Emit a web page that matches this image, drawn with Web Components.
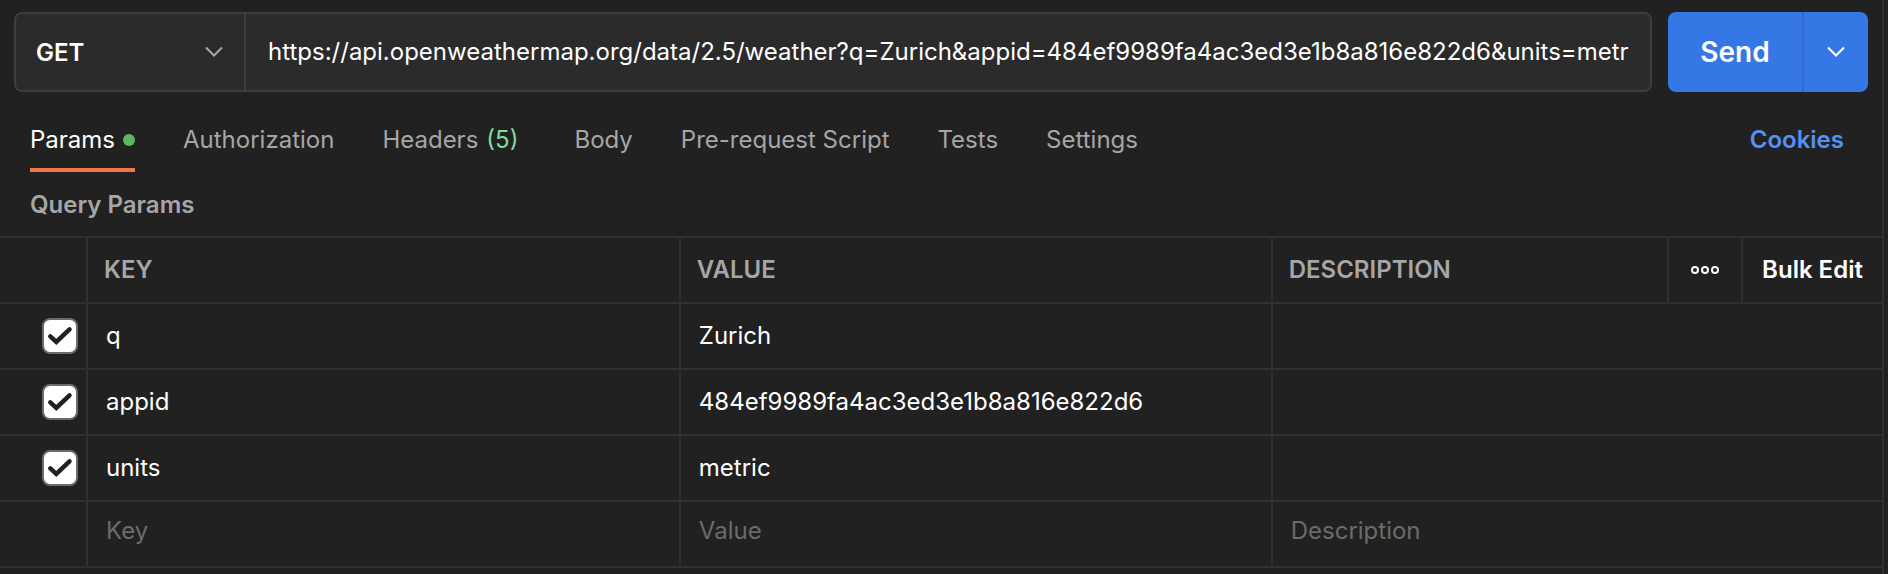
<!DOCTYPE html>
<html lang="en">
<head>
<meta charset="utf-8">
<title>Request builder</title>
<style>
html, body { height: 100%; }
body {
  margin: 0;
  background: #212121;
  color: #fff;
  font: 24px/32px Inter, "Liberation Sans", sans-serif;
  --bg: #212121;
  --field: #2b2b2b;
  --field-line: #3d3d3d;
  --line: #303030;
  --muted: #a6a6a6;
  --faint: #6b6b6b;
  --blue: #3578e5;
  --link: #5591f5;
  --orange: #f07747;
  --green: #5bb85d;
}
</style>
</head>
<body>
<request-panel>
  <request-bar slot="bar" method="GET" url="https://api.openweathermap.org/data/2.5/weather?q=Zurich&amp;appid=484ef9989fa4ac3ed3e1b8a816e822d6&amp;units=metric"></request-bar>
  <request-tabs slot="tabs">
    <request-tab selected dot>Params</request-tab>
    <request-tab>Authorization</request-tab>
    <request-tab count="(5)">Headers</request-tab>
    <request-tab>Body</request-tab>
    <request-tab>Pre-request Script</request-tab>
    <request-tab>Tests</request-tab>
    <request-tab>Settings</request-tab>
  </request-tabs>
  <span slot="heading">Query Params</span>
  <params-table slot="table"></params-table>
</request-panel>

<template id="request-panel">
  <style>
    :host { display: block; min-height: 100%; margin-right: 4px; border-right: 2px solid var(--line); box-sizing: border-box; }
    section { background: var(--bg); }
    .bar { padding: 12px 14px 0; }
    h2 { margin: 0; padding: 17px 30px 15px; font-size: 24px; line-height: 32px; font-weight: 600; color: var(--muted); }
  </style>
  <section>
    <div class="bar"><slot name="bar"></slot></div>
    <slot name="tabs"></slot>
    <h2><slot name="heading"></slot></h2>
    <slot name="table"></slot>
  </section>
</template>

<template id="request-bar">
  <style>
    :host { display: flex; gap: 16px; height: 80px; }
    .field { flex: 1; min-width: 0; display: flex; box-sizing: border-box; border: 2px solid var(--field-line); border-radius: 8px; background: var(--field); }
    .method { display: grid; width: 228px; border-right: 2px solid var(--field-line); }
    .method > * { grid-area: 1 / 1; }
    select { appearance: none; margin: 0; border: 0; padding: 2px 20px 0; background: none; color: inherit; font: inherit; font-weight: 600; }
    .method svg { place-self: center end; margin-right: 20px; pointer-events: none; }
    .url { flex: 1; min-width: 0; display: flex; padding: 0 20px 0 22px; }
    input { flex: 1; min-width: 0; border: 0; padding: 0; background: none; color: inherit; font: inherit; outline: 0; }
    .send { display: flex; width: 200px; border-radius: 8px; overflow: hidden; }
    button { border: 0; margin: 0; padding: 0; background: var(--blue); color: #fff; font: inherit; }
    .go { flex: 1; font-size: 28px; font-weight: 600; }
    .more { width: 66px; border-left: 2px solid #306cce; display: grid; place-items: center; }
    svg { display: block; }
  </style>
  <div class="field">
    <div class="method">
      <select aria-label="Method"></select>
      <svg width="20" height="12" viewBox="0 0 20 12" fill="none" stroke="#a6a6a6" stroke-width="2"><path d="M2 1.5l8 8 8-8"/></svg>
    </div>
    <div class="url"><input type="text" aria-label="Request URL" spellcheck="false"></div>
  </div>
  <div class="send">
    <button class="go" type="button">Send</button>
    <button class="more" type="button" aria-label="Send options">
      <svg width="20" height="12" viewBox="0 0 20 12" fill="none" stroke="#fff" stroke-width="2"><path d="M2 1.500l8 8 8-8"/></svg>
    </button>
  </div>
</template>

<template id="request-tabs">
  <style>
    :host { display: flex; align-items: flex-start; padding: 32px 38px 0 30px; }
    nav { display: flex; flex: 1; gap: 48px; }
    a { line-height: 32px; font-weight: 600; color: var(--link); text-decoration: none; }
  </style>
  <nav aria-label="Request sections"><slot></slot></nav>
  <a href="#cookies">Cookies</a>
</template>

<template id="request-tab">
  <style>
    :host { display: block; }
    button { display: flex; align-items: center; gap: 8px; margin: 0; border: 0; border-bottom: 4px solid transparent; padding: 0 0 12px; background: none; font: inherit; color: var(--muted); white-space: nowrap; }
    :host([selected]) button { color: #fff; border-color: var(--orange); }
    .dot, .count { display: none; }
    :host([dot]) .dot { display: block; width: 12px; height: 12px; border-radius: 50%; background: var(--green); }
    :host([count]) .count { display: block; color: #7fdc9b; margin-right: 8px; }
  </style>
  <button type="button"><span><slot></slot></span><span class="count"></span><span class="dot"></span></button>
</template>

<template id="params-table">
  <style>
    :host { display: block; }
    table { width: 100%; table-layout: fixed; border-collapse: separate; border-spacing: 0; border-top: 2px solid var(--line); }
    .c-check { width: 88px; }
    .c-key { width: 31.5%; }
    .c-value { width: 31.45%; }
    .c-more { width: 74px; }
    .c-bulk { width: 139px; }
    th, td { box-sizing: border-box; height: 66px; padding: 0; border-bottom: 2px solid var(--line); border-right: 2px solid var(--line); text-align: left; vertical-align: middle; }
    th:last-child, td:last-child { border-right: 0; }
    th { padding-left: 16px; font-weight: 600; color: var(--muted); }
    th.tool { padding: 0; }
    th button { display: grid; place-items: center; width: 100%; margin: 0; border: 0; padding: 0; background: none; font: inherit; color: #fff; white-space: nowrap; }
    .check { padding: 0 8px 0 0; }
    input[type=text] { display: block; box-sizing: border-box; width: 100%; height: 32px; margin: 0; border: 0; padding: 0 18px; background: none; color: inherit; font: inherit; outline: 0; }
    input::placeholder { color: var(--faint); opacity: 1; }
    .new td { padding-bottom: 6px; }
  </style>
  <table>
    <colgroup><col class="c-check"><col class="c-key"><col class="c-value"><col><col class="c-more"><col class="c-bulk"></colgroup>
    <thead>
      <tr>
        <th></th><th scope="col">KEY</th><th scope="col">VALUE</th><th scope="col">DESCRIPTION</th>
        <th class="tool"><button type="button" aria-label="More options"><svg width="30" height="10" viewBox="0 0 30 10" fill="none" stroke="#fff" stroke-width="2"><circle cx="5" cy="5" r="3"/><circle cx="15" cy="5" r="3"/><circle cx="25" cy="5" r="3"/></svg></button></th>
        <th class="tool"><button type="button">Bulk Edit</button></th>
      </tr>
    </thead>
    <tbody></tbody>
  </table>
</template>

<template id="param-check">
  <style>
    :host { display: grid; width: 36px; height: 36px; margin-left: auto; }
    input, svg { grid-area: 1 / 1; }
    input { appearance: none; width: 36px; height: 36px; margin: 0; box-sizing: border-box; border: 2px solid #6b6b6b; border-radius: 8px; background: #fff; }
    svg { pointer-events: none; visibility: hidden; }
    input:checked + svg { visibility: visible; }
  </style>
  <input type="checkbox" checked>
  <svg width="36" height="36" viewBox="0 0 36 36" fill="none" stroke="#212121" stroke-width="4.500" stroke-linecap="round"><path d="M8.300 18.300l6 5.500L27.500 11.300"/></svg>
</template>

<script>
class TemplateElement extends HTMLElement {
  constructor() {
    super();
    const root = this.attachShadow({ mode: "open" });
    root.append(document.getElementById(this.localName).content.cloneNode(true));
  }
  find(selector) { return this.shadowRoot.querySelector(selector); }
}

customElements.define("request-panel", class extends TemplateElement {});
customElements.define("request-tabs", class extends TemplateElement {});

customElements.define("request-bar", class extends TemplateElement {
  connectedCallback() {
    const select = this.find("select");
    for (const name of ["GET", "POST", "PUT", "PATCH", "DELETE"]) select.add(new Option(name));
    select.value = this.getAttribute("method");
    this.find("input").value = this.getAttribute("url");
  }
});

customElements.define("request-tab", class extends TemplateElement {
  connectedCallback() { this.find(".count").textContent = this.getAttribute("count") || ""; }
});

customElements.define("param-check", class extends TemplateElement {
  connectedCallback() { this.find("input").setAttribute("aria-label", this.getAttribute("label")); }
});

customElements.define("params-table", class extends TemplateElement {
  connectedCallback() {
    const rows = [["q", "Zurich", ""], ["appid", "484ef9989fa4ac3ed3e1b8a816e822d6", ""], ["units", "metric", ""], null];
    const names = ["Key", "Value", "Description"];
    const body = this.find("tbody");
    for (const row of rows) {
      const tr = body.insertRow();
      const first = tr.insertCell();
      first.className = "check";
      if (row) {
        const check = document.createElement("param-check");
        check.setAttribute("label", "Use " + row[0]);
        first.append(check);
      } else {
        tr.className = "new";
      }
      names.forEach((name, i) => {
        const cell = tr.insertCell();
        if (i === 2) cell.colSpan = 3;
        const input = document.createElement("input");
        input.type = "text";
        input.setAttribute("aria-label", name);
        if (row) input.value = row[i];
        else input.placeholder = name;
        cell.append(input);
      });
    }
  }
});
</script>
</body>
</html>
